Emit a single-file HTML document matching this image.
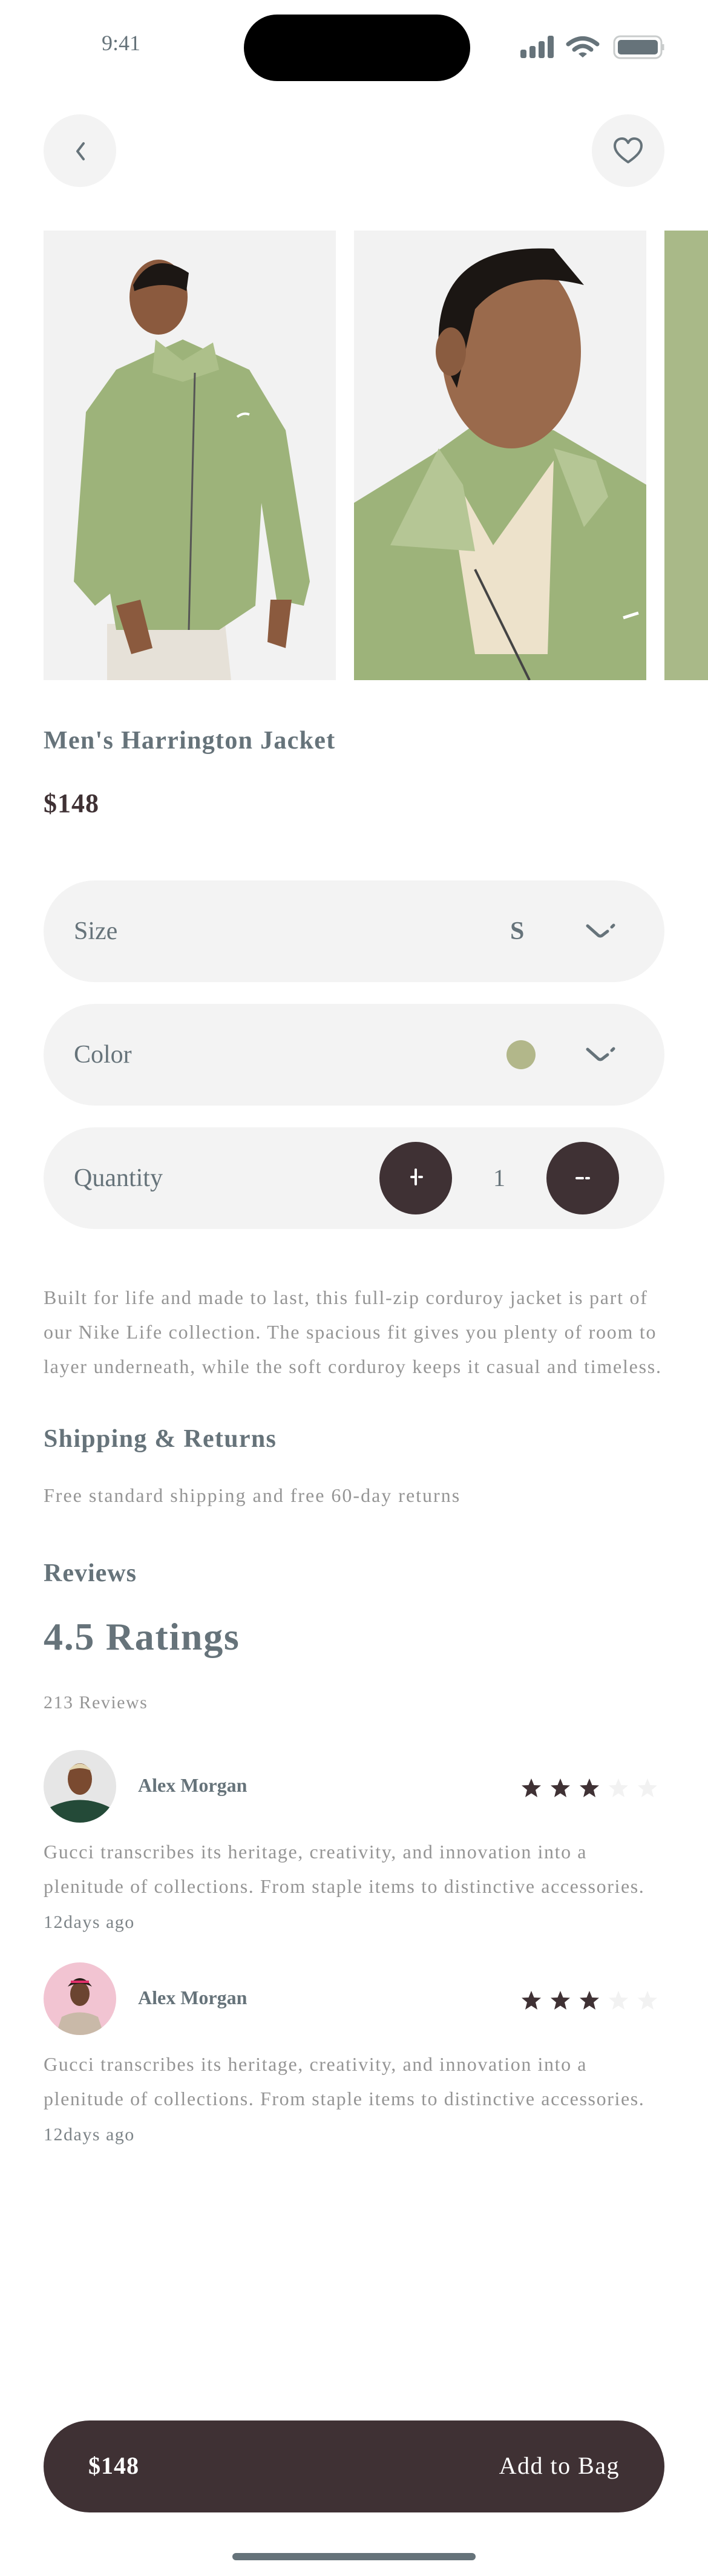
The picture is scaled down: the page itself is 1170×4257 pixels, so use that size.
<!DOCTYPE html>
<html><head><meta charset="utf-8"><style>
*{margin:0;padding:0;box-sizing:border-box}
html,body{width:1170px;height:4257px;background:#fff;overflow:hidden}
body{position:relative;font-family:"Liberation Serif",serif;color:#66737a}
.a{position:absolute}
.pill{position:absolute;left:72px;width:1026px;height:168px;border-radius:84px;background:#f3f3f3}
.lbl{position:absolute;left:50px;top:0;line-height:168px;font-size:42px;color:#66737a}
.circ{position:absolute;width:120px;height:120px;border-radius:60px;background:#3f3134}
.desc{font-size:32px;color:#959595;white-space:nowrap}
.h{font-weight:bold;font-size:42px;color:#66737a;white-space:nowrap}
</style></head><body>
<div class="a" style="left:168px;top:50px;font-size:36px;color:#66737a">9:41</div>
<div class="a" style="left:403px;top:24px;width:374px;height:110px;border-radius:55px;background:#000"></div>
<svg class="a" style="left:858px;top:56px" width="240" height="44" viewBox="0 0 240 44">
<rect x="2" y="26" width="10" height="14" rx="3" fill="#66737a"/>
<rect x="17" y="20" width="10" height="20" rx="3" fill="#66737a"/>
<rect x="32" y="12" width="10" height="28" rx="3" fill="#66737a"/>
<rect x="47" y="3" width="10" height="37" rx="3" fill="#66737a"/>
<path d="M81 17 Q105 -2 129 17" stroke="#66737a" stroke-width="7" fill="none" stroke-linecap="round"/>
<path d="M91 26 Q105 14 119 26" stroke="#66737a" stroke-width="7" fill="none" stroke-linecap="round"/>
<path d="M98 33 L105 39 L112 33 Q105 28 98 33Z" fill="#66737a"/>
<rect x="157" y="4" width="78" height="36" rx="10" fill="none" stroke="#c9cccc" stroke-width="3"/>
<rect x="163" y="10" width="66" height="24" rx="5" fill="#66737a"/>
<path d="M238 17 v10" stroke="#c9cccc" stroke-width="3"/>
</svg>
<div class="a" style="left:72px;top:189px;width:120px;height:120px;border-radius:60px;background:#f3f3f3"></div>
<svg class="a" style="left:72px;top:189px" width="120" height="120"><path d="M66 48 L56 61 L66 74" stroke="#66737a" stroke-width="4" fill="none" stroke-linecap="round" stroke-linejoin="round"/></svg>
<div class="a" style="left:978px;top:189px;width:120px;height:120px;border-radius:60px;background:#f3f3f3"></div>
<svg class="a" style="left:978px;top:189px" width="120" height="120"><path d="M60 79 C44 68 38 60 38 52 C38 44 44 40 50 40 C55 40 58 43 60 47 C62 43 65 40 70 40 C76 40 82 44 82 52 C82 60 76 68 60 79Z" stroke="#66737a" stroke-width="4" fill="none" stroke-linejoin="round"/></svg>
<svg class="a" style="left:72px;top:381px" width="483" height="743" viewBox="0 0 483 743">
<rect width="483" height="743" fill="#f2f2f2"/>
<path d="M105 650 L300 650 L310 743 L105 743Z" fill="#e6e1d8"/>
<path d="M120 230 L230 180 L340 230 L400 330 L440 580 L430 620 L385 610 L360 450 L350 620 L290 660 L120 660 L110 600 L85 620 L50 580 L70 300Z" fill="#9db37a"/>
<path d="M185 180 L230 215 L280 185 L290 230 L230 250 L180 235Z" fill="#adc08a"/>
<path d="M250 235 L240 660" stroke="#555" stroke-width="3"/>
<ellipse cx="190" cy="110" rx="48" ry="62" fill="#8b5a3e"/>
<path d="M148 90 Q180 30 240 70 L236 100 Q200 80 150 100Z" fill="#1c1714"/>
<path d="M120 620 L145 700 L180 690 L160 610Z" fill="#8b5a3e"/>
<path d="M375 610 L370 680 L400 690 L410 610Z" fill="#8b5a3e"/>
<path d="M320 308 Q330 300 340 304" stroke="#fff" stroke-width="4" fill="none"/>
</svg>
<svg class="a" style="left:585px;top:381px" width="483" height="743" viewBox="0 0 483 743">
<rect width="483" height="743" fill="#f2f2f2"/>
<path d="M0 450 L130 370 L200 320 L330 330 L483 420 L483 743 L0 743Z" fill="#9db37a"/>
<path d="M150 380 L230 520 L330 380 L320 700 L200 700Z" fill="#ede2cb"/>
<path d="M60 520 L140 360 L180 420 L200 530Z" fill="#b5c695"/>
<path d="M330 360 L380 490 L420 440 L400 380Z" fill="#b5c695"/>
<ellipse cx="260" cy="200" rx="115" ry="160" fill="#9a6a4c"/>
<path d="M140 200 Q130 20 330 30 L380 90 Q260 60 200 130 L170 260Z" fill="#1b1613"/>
<ellipse cx="160" cy="200" rx="25" ry="40" fill="#8a5c40"/>
<path d="M200 560 L290 743" stroke="#444" stroke-width="4"/>
<path d="M445 640 Q460 635 470 632" stroke="#fff" stroke-width="5" fill="none"/>
</svg>
<div class="a" style="left:1098px;top:381px;width:72px;height:743px;background:#a9b988"></div>
<div class="a h" style="left:72px;top:1200px;font-size:42px;letter-spacing:1.3px">Men's Harrington Jacket</div>
<div class="a" style="left:72px;top:1302px;font-size:44px;font-weight:bold;color:#3f3134;letter-spacing:1px">$148</div>
<div class="pill" style="top:1455px"><div class="lbl">Size</div>
<div class="a" style="left:771px;top:0;line-height:168px;font-size:42px;font-weight:bold;color:#66737a">S</div>
<svg class="a" style="left:890px;top:60px" width="60" height="50"><path d="M9 15 L27 31 Q30 33 33 31 L42 24 M49 17 L52 14" stroke="#66737a" stroke-width="5" fill="none" stroke-linecap="round"/></svg></div>
<div class="pill" style="top:1659px"><div class="lbl">Color</div>
<div class="a" style="left:765px;top:60px;width:48px;height:48px;border-radius:24px;background:#b2b78a"></div>
<svg class="a" style="left:890px;top:60px" width="60" height="50"><path d="M9 15 L27 31 Q30 33 33 31 L42 24 M49 17 L52 14" stroke="#66737a" stroke-width="5" fill="none" stroke-linecap="round"/></svg></div>
<div class="pill" style="top:1863px"><div class="lbl">Quantity</div>
<div class="circ" style="left:555px;top:24px"><svg width="120" height="120"><path d="M53 58 H60 M66 58 H70 M60 46 V70" stroke="#fff" stroke-width="4" stroke-linecap="round"/></svg></div>
<div class="a" style="left:743px;top:0;line-height:168px;font-size:40px;color:#66737a">1</div>
<div class="circ" style="left:831px;top:24px"><svg width="120" height="120"><path d="M50 60 H60 M66 60 H70" stroke="#fff" stroke-width="4" stroke-linecap="round"/></svg></div>
</div>
<div class="a desc" style="left:72px;top:2116px;line-height:57px;letter-spacing:1.75px">Built for life and made to last, this full-zip corduroy jacket is part of<br>our Nike Life collection. The spacious fit gives you plenty of room to<br>layer underneath, while the soft corduroy keeps it casual and timeless.</div>
<div class="a h" style="left:72px;top:2354px;letter-spacing:1.3px">Shipping &amp; Returns</div>
<div class="a desc" style="left:72px;top:2453px;letter-spacing:2px">Free standard shipping and free 60-day returns</div>
<div class="a h" style="left:72px;top:2576px;letter-spacing:1px">Reviews</div>
<div class="a" style="left:72px;top:2668px;font-size:64px;font-weight:bold;color:#66737a;letter-spacing:1.7px">4.5 Ratings</div>
<div class="a desc" style="left:72px;top:2797px;font-size:30px;letter-spacing:1.5px">213 Reviews</div>
<svg class="a" style="left:72px;top:2892px" width="120" height="120"><defs><clipPath id="c1"><circle cx="60" cy="60" r="60"/></clipPath></defs><g clip-path="url(#c1)"><rect width="120" height="120" fill="#e6e6e6"/><path d="M0 120 L10 95 Q60 70 110 95 L120 120Z" fill="#244a38"/><ellipse cx="60" cy="48" rx="20" ry="26" fill="#7a4a30"/><path d="M40 35 Q60 10 80 35 Q60 25 40 35Z" fill="#e3d5b0"/></g></svg>
<div class="a" style="left:228px;top:2932px;font-size:32px;font-weight:bold;color:#66737a">Alex Morgan</div>
<svg class="a" style="left:860px;top:2937px" width="240" height="40" viewBox="0 0 240 40">
<g id="st"><path d="M18 2 L22.5 13 L34 13.5 L25 21 L28 33 L18 26.5 L8 33 L11 21 L2 13.5 L13.5 13Z" fill="#3f3134"/></g>
<use href="#st" x="48"/><use href="#st" x="96"/>
<g transform="translate(144,0)"><path d="M18 2 L22.5 13 L34 13.5 L25 21 L28 33 L18 26.5 L8 33 L11 21 L2 13.5 L13.5 13Z" fill="#f2f2f2"/></g>
<g transform="translate(192,0)"><path d="M18 2 L22.5 13 L34 13.5 L25 21 L28 33 L18 26.5 L8 33 L11 21 L2 13.5 L13.5 13Z" fill="#f2f2f2"/></g>
</svg>
<div class="a desc" style="left:72px;top:3032px;line-height:57px;letter-spacing:1.6px">Gucci transcribes its heritage, creativity, and innovation into a<br>plenitude of collections. From staple items to distinctive accessories.</div>
<div class="a desc" style="left:72px;top:3160px;font-size:30px;color:#7d8488;letter-spacing:1.5px">12days ago</div>
<svg class="a" style="left:72px;top:3243px" width="120" height="120"><defs><clipPath id="c2"><circle cx="60" cy="60" r="60"/></clipPath></defs><g clip-path="url(#c2)"><rect width="120" height="120" fill="#f2c4d2"/><path d="M20 120 L30 90 Q60 75 90 90 L100 120Z" fill="#c9b9a8"/><ellipse cx="60" cy="52" rx="16" ry="20" fill="#6b4430"/><path d="M40 40 Q60 12 80 40 Q60 30 40 40Z" fill="#2a1d18"/><path d="M45 32 H75" stroke="#e0306a" stroke-width="4"/></g></svg>
<div class="a" style="left:228px;top:3283px;font-size:32px;font-weight:bold;color:#66737a">Alex Morgan</div>
<svg class="a" style="left:860px;top:3288px" width="240" height="40" viewBox="0 0 240 40">
<use href="#st"/><use href="#st" x="48"/><use href="#st" x="96"/>
<g transform="translate(144,0)"><path d="M18 2 L22.5 13 L34 13.5 L25 21 L28 33 L18 26.5 L8 33 L11 21 L2 13.5 L13.5 13Z" fill="#f2f2f2"/></g>
<g transform="translate(192,0)"><path d="M18 2 L22.5 13 L34 13.5 L25 21 L28 33 L18 26.5 L8 33 L11 21 L2 13.5 L13.5 13Z" fill="#f2f2f2"/></g>
</svg>
<div class="a desc" style="left:72px;top:3383px;line-height:57px;letter-spacing:1.6px">Gucci transcribes its heritage, creativity, and innovation into a<br>plenitude of collections. From staple items to distinctive accessories.</div>
<div class="a desc" style="left:72px;top:3511px;font-size:30px;color:#7d8488;letter-spacing:1.5px">12days ago</div>
<div class="a" style="left:72px;top:4000px;width:1026px;height:152px;border-radius:76px;background:#3f3134"></div>
<div class="a" style="left:146px;top:4051px;font-size:40px;font-weight:bold;color:#fff;letter-spacing:1px">$148</div>
<div class="a" style="right:146px;top:4051px;font-size:40px;color:#fff;white-space:nowrap;letter-spacing:1.5px">Add to Bag</div>
<div class="a" style="left:384px;top:4219px;width:402px;height:12px;border-radius:6px;background:#66737a"></div>
</body></html>
